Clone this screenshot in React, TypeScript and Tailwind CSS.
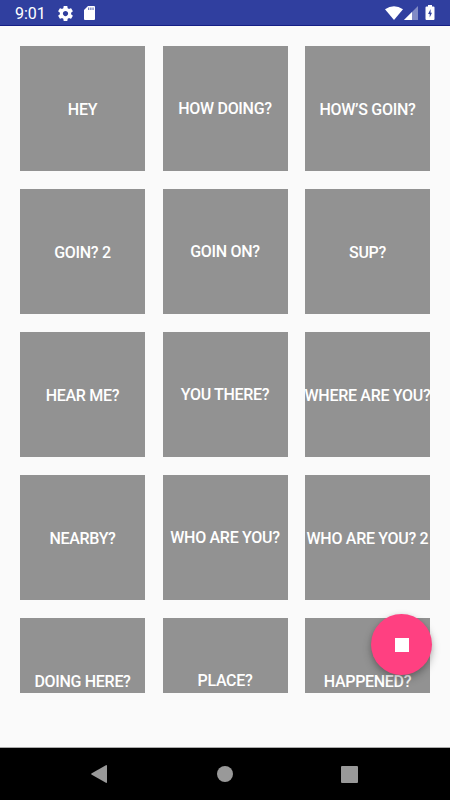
const rows = [
  ['HEY', 'HOW DOING?', 'HOW’S GOIN?'],
  ['GOIN? 2', 'GOIN ON?', 'SUP?'],
  ['HEAR ME?', 'YOU THERE?', 'WHERE ARE YOU?'],
  ['NEARBY?', 'WHO ARE YOU?', 'WHO ARE YOU? 2'],
  ['DOING HERE?', 'PLACE?', 'HAPPENED?'],
];

function StatusBar() {
  return (
    <header className="flex h-[26px] shrink-0 items-center border-b border-[#151f86] bg-[#303f9f] text-white">
      <span className="ml-[15px] w-[43px] pt-[3px] text-[16px] leading-5">9:01</span>
      {/* Settings */}
      <svg className="mt-px h-[15px] w-[15px]" viewBox="2 2 20 20" fill="currentColor">
        <path d="M19.43 12.98c.04-.32.07-.64.07-.98s-.03-.66-.07-.98l2.11-1.65c.19-.15.24-.42.12-.64l-2-3.46c-.12-.22-.39-.3-.61-.22l-2.49 1c-.52-.4-1.08-.73-1.69-.98l-.38-2.65C14.46 2.18 14.25 2 14 2h-4c-.25 0-.46.18-.49.42l-.38 2.65c-.61.25-1.17.59-1.69.98l-2.49-1c-.23-.09-.49 0-.61.22l-2 3.46c-.13.22-.07.49.12.64l2.11 1.65c-.04.32-.07.65-.07.98s.03.66.07.98l-2.11 1.65c-.19.15-.24.42-.12.64l2 3.46c.12.22.39.3.61.22l2.49-1c.52.4 1.08.73 1.69.98l.38 2.65c.03.24.24.42.49.42h4c.25 0 .46-.18.49-.42l.38-2.65c.61-.25 1.17-.59 1.69-.98l2.49 1c.23.09.49 0 .61-.22l2-3.46c.12-.22.07-.49-.12-.64l-2.11-1.65zM12 15.5c-1.93 0-3.5-1.57-3.5-3.5s1.57-3.5 3.5-3.5 3.5 1.57 3.5 3.5-1.57 3.5-3.5 3.5z" />
      </svg>
      {/* SD card */}
      <svg className="mt-px ml-[11px] h-[14px] w-[11px]" viewBox="0 0 11 14">
        <path d="M4 0h6Q11 0 11 1V13Q11 14 10 14H1Q0 14 0 13V4z" fill="currentColor" />
        <path d="M4 1.5h1.3v2.5H4zM6.2 1.5h1.3v2.5H6.2zM8.4 1.5h1.3v2.5H8.4z" fill="#303f9f" opacity=".65" />
      </svg>
      <div className="mr-[15px] ml-auto flex items-center">
        {/* Wi-Fi */}
        <svg className="h-[14px] w-[18px]" viewBox="0 0 18 14">
          <path d="M0 3.2Q9-2.6 18 3.2L9 14z" fill="currentColor" />
        </svg>
        {/* Signal */}
        <svg className="mt-px ml-[1px] h-[14px] w-[14px]" viewBox="0 0 14 14" fill="currentColor">
          <path d="M14 0V14H0z" opacity=".4" />
          <path d="M8 6V14H0z" />
        </svg>
        {/* Battery */}
        <svg className="ml-[7px] h-[15px] w-[10px]" viewBox="0 0 10 15">
          <path d="M3 0h4v1.5h1.5Q9.5 1.5 9.5 2.5V14q0 1-1 1h-7q-1 0-1-1V2.5q0-1 1-1H3z" fill="currentColor" />
          <path d="M5.6 4 3.1 9h1.6v3.5L7 7.7H5.6z" fill="#303f9f" />
        </svg>
      </div>
    </header>
  );
}

function NavBar() {
  return (
    <nav className="flex h-[53px] shrink-0 items-center justify-between border-t border-[#aaaaaa] bg-black pr-[92px] pl-[91px] text-[#999999]">
      <svg className="h-[18px] w-[16px]" viewBox="0 0 16 18" fill="currentColor">
        <path d="M15.3 0Q16 0 16 .8V17.2Q16 18 15.3 18L.4 9.4Q0 9 .4 8.6z" />
      </svg>
      <span className="ml-px h-4 w-4 rounded-full bg-[#999999]" />
      <span className="h-[17px] w-[17px] rounded-[1px] bg-[#999999]" />
    </nav>
  );
}

export default function App() {
  return (
    <div className="relative flex h-[800px] w-[450px] flex-col overflow-hidden bg-[#fafafa] font-['Roboto',sans-serif]">
      <StatusBar />

      <main className="mx-5 mt-5 h-[647px] shrink-0 overflow-hidden">
        <div className="grid auto-rows-[125px] grid-cols-3 gap-x-[17.5px] gap-y-[18px]">
          {rows.flat().map((label, i) => (
            <button
              key={label}
              className={`flex items-center justify-center bg-[#929292] text-[16px] font-medium tracking-[-0.3px] whitespace-nowrap text-white ${
                i % 3 === 1 ? 'pt-px' : 'pt-[3px]'
              }`}
            >
              {label}
            </button>
          ))}
        </div>
      </main>

      <div className="flex-1" />
      <NavBar />

      {/* Floating stop button */}
      <button className="absolute top-[614px] left-[371px] flex h-[61px] w-[61px] items-center justify-center rounded-full bg-[#ff4081] shadow-[0_4px_9px_rgba(0,0,0,0.28),0_1px_4px_rgba(0,0,0,0.1)]">
        <span className="h-[14px] w-[14px] bg-white" />
      </button>
    </div>
  );
}
